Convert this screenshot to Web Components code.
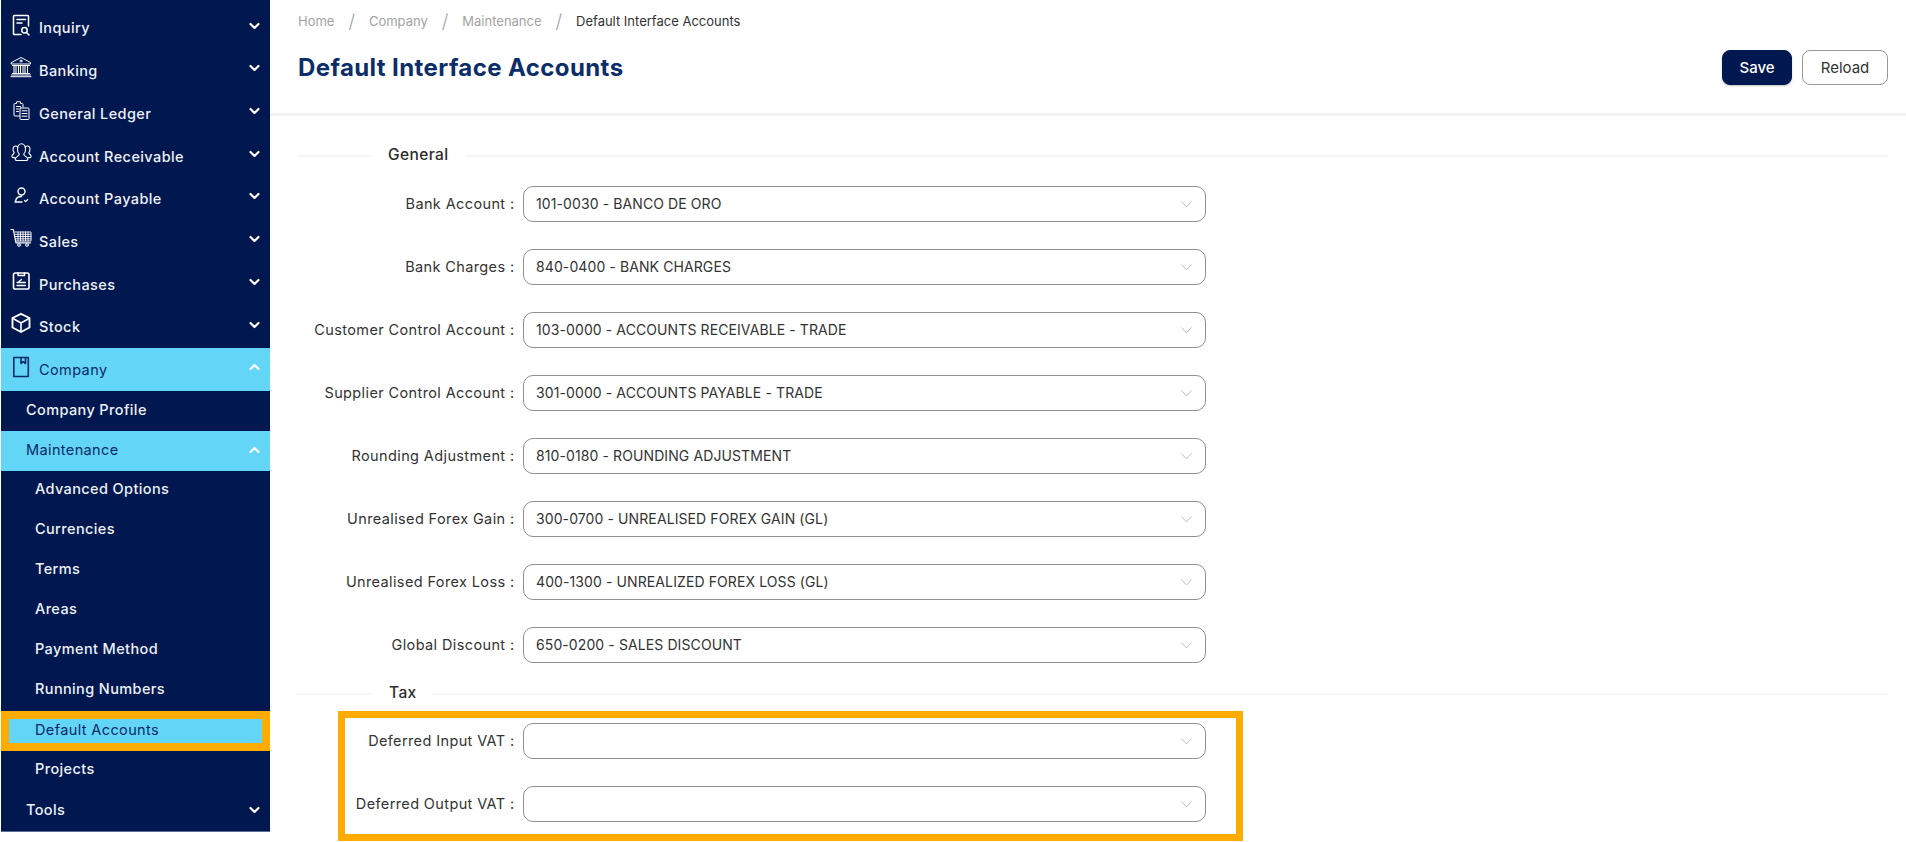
<!DOCTYPE html>
<html><head><meta charset="utf-8"><title>Default Interface Accounts</title>
<style>
html,body{margin:0;height:842px;overflow:hidden;background:#fff;font-family:Inter,"Noto Sans",sans-serif}
</style></head><body>
<erp-app></erp-app>
<script>
const NAVY='#00174f';
const ICONS={
inquiry:`<path d="M10 20.500H3.300a.8.8 0 0 1-.8-.8V2.300a.8.8 0 0 1 .8-.8h13.400a.8.8 0 0 1 .8.8V12" stroke-width="1.500"/><path d="M6 5.500h8.500M6 9h5" stroke-width="1.500"/><circle cx="13.500" cy="16.300" r="2.700" stroke-width="1.500"/><path d="M15.500 18.500l2.500 2.500" stroke-width="1.500"/>`,
bank:`<path d="M.5 5.500 10 .5l9.500 5v1.500H.5z"/><circle cx="10" cy="4" r="1"/><path d="M1.500 8.500h17M1.500 16.500h17M.5 18h19M0 19.700h20"/><path d="M3 9v7M5 9v7M7.500 9v7M9.500 9v7M12 9v7M14 9v7M16.500 9v7" stroke-width="1.100"/>`,
ledger:`<path d="M8.500 16H4a1 1 0 0 1-1-1V4.500a1 1 0 0 1 1-1h1.500V1.800h4v1.700H11a1 1 0 0 1 1 1V7"/><rect x="9" y="8" width="9" height="11.500" rx=".8"/><path d="M11 10.800h5M11 13.500h5M11 16.200h5M5.500 6.500h4M5.500 9h2M5.500 11.500h2"/>`,
users:`<path d="M6 18.500c-1.500 0-2-1-1.700-2 .8-2 3.800-2.500 4-4.300C7 11 6.500 9.500 6.500 7.500c0-3.500 1.800-5.800 4-5.800s4 2.300 4 5.800c0 2-.5 3.500-1.800 4.700.2 1.800 3.200 2.300 4 4.300.3 1-.2 2-1.700 2z" stroke-width="1.100"/><g transform="translate(0 1.300)"><path d="M6.800 3.800C6.200 3 5.400 2.700 4.800 2.700 3 2.700 2 4.300 2 6.200c0 1.200.4 2.300 1.200 3 0 1.500-1.700 1.800-2.200 3.400-.2.900.2 1.700 1.200 1.700h1.500M14.200 3.800c.6-.8 1.400-1.100 2-1.100 1.800 0 2.800 1.600 2.800 3.500 0 1.200-.4 2.300-1.200 3 0 1.500 1.700 1.800 2.200 3.400.2.900-.2 1.700-1.200 1.700h-1.500" stroke-width="1.100"/></g>`,
user:`<circle cx="10.500" cy="6.500" r="3.500" stroke-width="1.400"/><path d="M10.500 11.500c-3.500 0-5.500 2-5.700 4l-.8 1.500h7" stroke-width="1.400"/><path d="M13.500 15.500l1.200 1.200 2-2.200" stroke-width="1.200"/>`,
cart:`<path d="M0 1.500h2.300L5 14.800h14.500" stroke-width="1.200"/><path d="M3.500 4H20v9H5M3.900 6.300H20M4.300 8.500H20M4.700 10.800H20M7 4v9M9.500 4v9M12 4v9M14.500 4v9M17 4v9" stroke-width=".9"/><circle cx="8" cy="17" r="1.400" stroke-width="1"/><circle cx="16" cy="17" r="1.400" stroke-width="1"/>`,
clip:`<rect x="2.500" y="3" width="15.500" height="16" rx="1.800" stroke-width="1.600"/><path d="M7 3v2.500h6.500V3" stroke-width="1.500"/><path d="M6 15.500h8.500M6 12.500h8.500M10.500 9.500 8 11.500" stroke-width="1.300"/>`,
box:`<path d="M10 .8 18.500 5v9.500L10 19 1.500 14.500V5z" stroke-width="1.900"/><path d="M2 5.500 10 10l8-4.500M10 10v8.500" stroke-width="1.600"/>`,
book:`<path d="M2.800 1.500h14.500v19H2.800zM10 1.500v6l2.200-1.800 2.300 1.800v-6" stroke-width="1.600"/>`
};
const def=(n,html)=>customElements.define(n,class extends HTMLElement{
  constructor(){super();this.attachShadow({mode:'open'});}
  connectedCallback(){this.shadowRoot.innerHTML=html(this);}
});
const chev=(up)=>`<svg width="11" height="8" viewBox="0 0 11 8" fill="none" stroke="currentColor" stroke-width="2.200" stroke-linecap="round" stroke-linejoin="round"><path d="${up?'M1.500 6 5.500 2l4 4':'M1.500 2l4 4 4-4'}"/></svg>`;

def('nav-item',h=>{
  const ic=h.getAttribute('icon'),active=h.hasAttribute('active');
  const c=active?'#0a2a68':'#fff';
  return `<style>
  :host{display:flex;align-items:center;height:42.7px;background:${active?'#63d5f6':'transparent'};color:${active?'#0a2a68':'#eef1f6'};font:${active?400:500} 14.500px/1 Inter,sans-serif;letter-spacing:.4px;padding:0 10px 0 9px;box-sizing:border-box}
  .i{width:24px;height:24px;margin-right:5px;margin-top:-3px;flex:none;color:${c}}
  svg.ic{display:block;overflow:visible}
  .t{flex:1;margin-top:2px}.c{color:#fff;display:flex;margin-top:-4px}
  </style><span class="i"><svg class="ic" width="24" height="24" viewBox="-1 0 24 24" fill="none" stroke="currentColor" stroke-width="1" stroke-linejoin="round" stroke-linecap="round">${ICONS[ic]}</svg></span><span class="t"><slot></slot></span><span class="c">${chev(active)}</span>`;
});
def('sub-item',h=>{
  const lv=h.getAttribute('level')||'1',st=h.getAttribute('state')||'',exp=h.getAttribute('chev');
  const active=st==='active',mark=st==='marked';
  const pad=lv==='2'?34:25;
  return `<style>
  :host{display:flex;align-items:center;height:40px;box-sizing:border-box;background:${active||mark?'#63d5f6':'transparent'};color:${active||mark?'#0a2a68':'#eef1f6'};font:${active||mark?400:500} 14.500px/1 Inter,sans-serif;letter-spacing:.38px;padding:0 10px 0 ${mark?pad-8:pad}px;${mark?'border:8px solid #ffab00;padding-right:2px;':''}}
  .t{flex:1;${lv==='2'&&!mark?'margin-top:-2px;':''}}.c{color:#fff;display:flex;margin-top:-2px}
  </style><span class="t"><slot></slot></span>${exp?`<span class="c">${chev(exp==='up')}</span>`:''}`;
});
def('side-bar',()=>`<style>
  :host{display:block;width:269px;height:832px;margin-left:1px;box-sizing:border-box;background:${NAVY};padding-top:6.400px;border-bottom:1px solid #5d6e96;overflow:hidden;flex:none}
  </style><slot></slot>`);
def('bread-crumbs',()=>`<style>
  :host{display:flex;align-items:center;font:400 13px/1 Inter,sans-serif;color:#a3a3a3;height:14px}
  ::slotted(b){font-weight:400;color:#333}
  ::slotted(i){font-style:normal;font-size:19px;color:#a3a3a3;font-weight:300;width:34.500px;text-align:center}
  </style><slot></slot>`);
def('btn-x',h=>{const p=h.hasAttribute('primary');return `<style>
  :host{display:flex;align-items:center;justify-content:center;height:35px;box-sizing:border-box;border-radius:8px;font:500 15px/1 Inter,sans-serif;width:${p?'70px':'86px'};background:${p?NAVY:'#fff'};color:${p?'#fff':'#333'};border:1px solid ${p?NAVY:'#999'};${p?'box-shadow:0 1px 2px rgba(0,0,0,.25);':'font-weight:400;'}}
  </style><slot></slot>`;});
def('page-head',()=>`<style>
  :host{display:flex;justify-content:space-between;box-sizing:border-box;height:116px;border-bottom:3px solid #f2f2f2;padding:14px 18px 0 28px}
  h1{margin:26px 0 0;font:700 24px/1.2 Inter,sans-serif;color:#0b2e6b;letter-spacing:.4px}
  .b{display:flex;gap:10px;margin-top:36px}
  </style><div><slot name="crumbs"></slot><h1><slot name="title"></slot></h1></div><div class="b"><slot name="actions"></slot></div>`);
def('sec-title',h=>`<style>
  :host{display:flex;align-items:center;height:20px;font:500 15.500px/1 Inter,sans-serif;color:#2c2c2c}
  .l{height:2px;background:#f5f5f5;margin-top:2px}.a{width:75px}.b{flex:1}.t{padding:0 ${h.getAttribute('pr')||'16'}px 0 ${h.getAttribute('pl')||'16'}px;letter-spacing:.4px}
  </style><span class="l a"></span><span class="t"><slot></slot></span><span class="l b"></span>`);
def('form-row',h=>`<style>
  :host{display:flex;align-items:center;height:36px;margin-bottom:27px;font:400 14.500px/1 Inter,sans-serif;color:#333}
  .lb{width:217.500px;text-align:right;letter-spacing:.38px;white-space:nowrap;flex:none}
  .s{margin-left:8.500px;width:683px;height:36px;box-sizing:border-box;border:1px solid #8f8f8f;border-radius:10px;display:flex;align-items:center;padding:0 13px 0 12px;background:#fff;font-size:14px;letter-spacing:.1px}
  .v{flex:1}
  svg{display:block}
  </style><span class="lb">${h.getAttribute('label')} :</span><div class="s"><span class="v"><slot></slot></span><svg width="11" height="7" viewBox="0 0 11 7" fill="none" stroke="#bdbdbd" stroke-width="1"><path d="M.5.500 5.500 6l5-5.500"/></svg></div>`);
def('mark-box',()=>`<style>
  :host{position:absolute;left:338px;top:711px;width:905px;height:130px;box-sizing:border-box;border:7.500px solid #ffab00;pointer-events:none}
  </style>`);
def('main-pane',()=>`<style>
  :host{display:block;flex:1;min-width:0}
  .f{padding:29px 18px 0 27px}
  .g{margin-top:21px}
  .tax{margin:-7px 0 20px}
  </style><slot name="head"></slot><div class="f"><slot name="general-title"></slot><div class="g"><slot name="general"></slot></div><div class="tax"><slot name="tax-title"></slot></div><slot name="tax"></slot></div><slot name="mark"></slot>`);
def('erp-app',()=>{
 const rows=[['Bank Account','101-0030 - BANCO DE ORO'],['Bank Charges','840-0400 - BANK CHARGES'],['Customer Control Account','103-0000 - ACCOUNTS RECEIVABLE - TRADE'],['Supplier Control Account','301-0000 - ACCOUNTS PAYABLE - TRADE'],['Rounding Adjustment','810-0180 - ROUNDING ADJUSTMENT'],['Unrealised Forex Gain','300-0700 - UNREALISED FOREX GAIN (GL)'],['Unrealised Forex Loss','400-1300 - UNREALIZED FOREX LOSS (GL)'],['Global Discount','650-0200 - SALES DISCOUNT']];
 const nav=[['inquiry','Inquiry'],['bank','Banking'],['ledger','General Ledger'],['users','Account Receivable'],['user','Account Payable'],['cart','Sales'],['clip','Purchases'],['box','Stock']];
 return `<style>
 :host{display:flex;height:842px;position:relative;overflow:hidden}
 </style>
 <side-bar>
 ${nav.map(n=>`<nav-item icon="${n[0]}">${n[1]}</nav-item>`).join('')}
 <nav-item icon="book" active>Company</nav-item>
 <sub-item>Company Profile</sub-item>
 <sub-item state="active" chev="up">Maintenance</sub-item>
 <sub-item level="2">Advanced Options</sub-item>
 <sub-item level="2">Currencies</sub-item>
 <sub-item level="2">Terms</sub-item>
 <sub-item level="2">Areas</sub-item>
 <sub-item level="2">Payment Method</sub-item>
 <sub-item level="2">Running Numbers</sub-item>
 <sub-item level="2" state="marked">Default Accounts</sub-item>
 <sub-item level="2">Projects</sub-item>
 <sub-item chev="down">Tools</sub-item>
 </side-bar>
 <main-pane>
  <page-head slot="head">
    <bread-crumbs slot="crumbs"><span>Home</span><i>/</i><span>Company</span><i>/</i><span>Maintenance</span><i>/</i><b>Default Interface Accounts</b></bread-crumbs>
    <span slot="title">Default Interface Accounts</span>
    <btn-x slot="actions" primary>Save</btn-x><btn-x slot="actions">Reload</btn-x>
  </page-head>
  <sec-title slot="general-title">General</sec-title>
  ${rows.map(r=>`<form-row slot="general" label="${r[0]}">${r[1]}</form-row>`).join('')}
  <sec-title slot="tax-title" pl="17">Tax</sec-title>
  <form-row slot="tax" label="Deferred Input VAT"></form-row>
  <form-row slot="tax" label="Deferred Output VAT"></form-row>
  <mark-box slot="mark"></mark-box>
 </main-pane>`;
});
</script>
</body></html>
